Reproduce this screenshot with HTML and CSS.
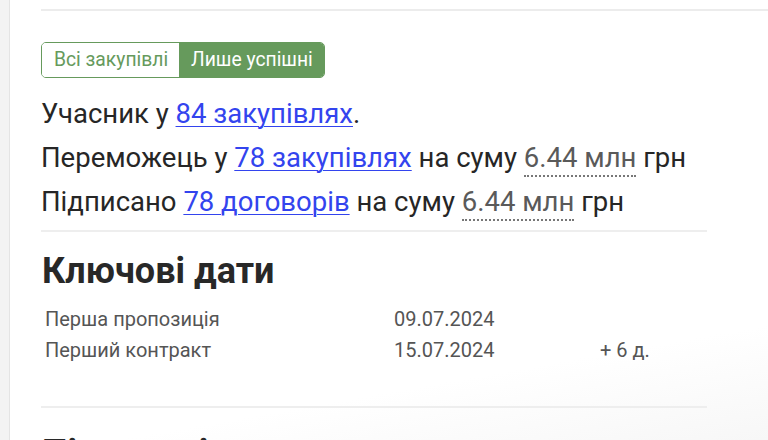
FILE: index.html
```html
<!DOCTYPE html>
<html>
<head>
    <title>Учасник</title>
    <link rel="stylesheet" href="styles.css">
</head>
<body>
    <div class="side"></div>
    <div class="main">
        <div class="top-rule"></div>

        <div class="content">
            <div class="toggle">
                <span class="toggle-btn">Всі закупівлі</span>
                <span class="toggle-btn active">Лише успішні</span>
            </div>

            <div class="stats">
                <p>Учасник у <a href="#">84 закупівлях</a>.</p>
                <p>Переможець у <a href="#">78 закупівлях</a> на суму <span class="amount">6.44 млн</span> грн</p>
                <p>Підписано <a href="#">78 договорів</a> на суму <span class="amount">6.44 млн</span> грн</p>
            </div>

            <div class="section">
                <h2>Ключові дати</h2>
                <table class="dates">
                    <tr>
                        <td class="label">Перша пропозиція</td>
                        <td class="date">09.07.2024</td>
                        <td class="diff"></td>
                    </tr>
                    <tr>
                        <td class="label">Перший контракт</td>
                        <td class="date">15.07.2024</td>
                        <td class="diff">+ 6 д.</td>
                    </tr>
                </table>
            </div>

            <div class="section section-next">
                <h2>Підписані договори</h2>
            </div>
        </div>
    </div>
</body>
</html>
```

FILE: styles.css
```css
body {
    font-family: Roboto, "Noto Sans", sans-serif;
    margin: 0;
    padding: 0;
    display: flex;
    height: 440px;
    overflow: hidden;
    color: #222;
    background-color: #fff;
}

.side {
    width: 9px;
    flex-shrink: 0;
    background-color: #f3f3f3;
    border-right: 1px solid #e4e4e4;
}

.main {
    flex: 1;
    padding-left: 31px;
    background: linear-gradient(170deg, #fff 80%, #f7f7f7 100%);
}

.top-rule {
    margin-top: 9px;
    height: 2px;
    background-color: #ececec;
}

.content {
    width: 666px;
}

/* toggle buttons */
.toggle {
    display: inline-flex;
    margin-top: 31px;
    border: 1px solid #669a5c;
    border-radius: 5px;
    overflow: hidden;
}

.toggle-btn {
    padding: 0 11px 0 12px;
    height: 34px;
    line-height: 34px;
    font-size: 19.3px;
    color: #669a5c;
    background-color: #fff;
}

.toggle-btn.active {
    color: #fff;
    background-color: #669a5c;
}

/* summary lines */
.stats {
    margin-top: 14px;
    padding-bottom: 6px;
    border-bottom: 2px solid #eeeeee;
}

.stats p {
    margin: 0;
    font-size: 27.5px;
    line-height: 44px;
    color: #262626;
}

.stats a {
    color: #3344ee;
    text-decoration: underline;
    text-underline-offset: 3px;
    text-decoration-thickness: 1px;
}

.amount {
    color: #5a5a5a;
    border-bottom: 2px dotted #777;
    padding-bottom: 1px;
}

/* key dates */
.section {
    padding-top: 18px;
    padding-bottom: 40px;
    border-bottom: 2px solid #eeeeee;
}

.section-next {
    padding-top: 24px;
}

.section h2 {
    margin: 0 0 12px 1px;
    font-size: 36px;
    line-height: 42px;
    font-weight: bold;
    color: #282828;
}

.dates {
    border-collapse: collapse;
    margin-left: 4px;
}

.dates td {
    padding: 0;
    font-size: 20px;
    line-height: 31px;
    color: #555;
}

.dates .label {
    width: 349px;
}

.dates .date {
    width: 206px;
}
```
